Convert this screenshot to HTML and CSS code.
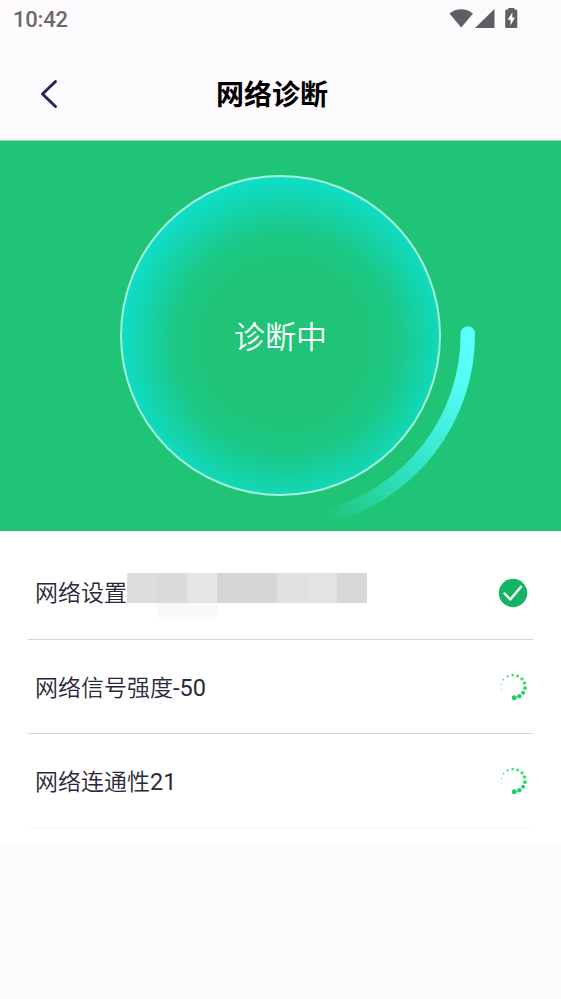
FILE: index.html
```html
<!DOCTYPE html>
<html lang="zh-CN">
<head>
<meta charset="utf-8">
<title>网络诊断</title>
<link rel="stylesheet" href="styles.css">
</head>
<body>
<div class="status">
  <span class="time">10:42</span>
  <svg class="status-icons" width="73" height="24" viewBox="0 0 73 24" fill="#615e63">
    <path d="M.5 8.500C7 2.800 17.500 2.800 24 8.500L12.200 22.500Z"/>
    <path d="M26 23 45.500 4V23Z"/>
    <path fill-rule="evenodd" d="M59.300 4.500V3H65.300V4.500H67Q68.300 4.500 68.300 6V21.500Q68.300 23 67 23H57.500Q56.200 23 56.200 21.500V6Q56.200 4.500 57.500 4.500ZM63.300 7.500 58.500 14.800H61.500V20.500L66 12.500H63.300Z"/>
  </svg>
</div>
<header class="header">
  <svg class="back" width="19" height="30" viewBox="0 0 19 30" fill="none" stroke="#1d285b" stroke-width="3" stroke-linecap="round" stroke-linejoin="round"><path d="M16.500 2.500 3.500 15 16.500 27.500"/></svg>
  <h1 class="title">网络诊断</h1>
</header>
<section class="hero">
  <div class="disc"><span class="phase">诊断中</span></div>
  <svg class="arc" width="561" height="390" viewBox="0 0 561 390" fill="none">
    <defs><linearGradient id="fade" gradientUnits="userSpaceOnUse" x1="467" y1="193" x2="330" y2="381">
      <stop offset="0" stop-color="#5cffff"/>
      <stop offset=".2" stop-color="#53fbf3"/>
      <stop offset=".5" stop-color="#3aead2"/>
      <stop offset=".75" stop-color="#2ad9ae"/>
      <stop offset=".9" stop-color="#22cc8d"/>
      <stop offset="1" stop-color="#1fc477"/>
    </linearGradient></defs>
    <path d="M467.800 193.500A187.500 187.500 0 0 1 325 376.500" stroke="url(#fade)" stroke-width="14.500" stroke-linecap="round"/>
  </svg>
</section>
<main class="list">
  <div class="row">
    <span class="label">网络设置</span>
    <span class="mask"><i class="a"></i><i class="b"></i><i class="c"></i><i class="d"></i><i class="d"></i><i class="e"></i><i class="f"></i><i class="g"></i></span>
    <svg class="state" width="30" height="30" viewBox="0 0 30 30"><circle cx="15" cy="15" r="14.200" fill="#16b364"/><path d="M6.500 15.500 12.300 21.500 23 8.700" fill="none" stroke="#fff" stroke-width="2.400" stroke-linecap="round" stroke-linejoin="round"/></svg>
  </div>
  <div class="row">
    <span class="label">网络信号强度<span class="num">-50</span></span>
    <svg class="state" width="30" height="30" viewBox="0 0 30 30"><g id="dots" transform="translate(1 -.6)">
      <circle cx="15.300" cy="26.300" r="2.500" fill="#1fcb6d"/><circle cx="20.300" cy="24.800" r="2.200" fill="#20ce6d"/><circle cx="24.100" cy="21.300" r="2" fill="#24d16d"/><circle cx="25.900" cy="16.700" r="1.900" fill="#2bd66d"/><circle cx="25.500" cy="11.700" r="1.750" fill="#32dc6c"/><circle cx="23" cy="7.500" r="1.650" fill="#35df69"/><circle cx="18.700" cy="4.500" r="1.500" fill="#36e065"/><circle cx="13.600" cy="3.700" r="1.250" fill="#36df62"/><circle cx="8.600" cy="5" r="1.050" fill="#3bdc65"/><circle cx="4.500" cy="8.200" r=".85" fill="#43da6c"/><circle cx="2.500" cy="12.700" r=".7" fill="#4fd976"/><circle cx="2.500" cy="17.600" r=".6" fill="#6bdd8a"/><circle cx="4.700" cy="22.200" r=".35" fill="#b6edc5"/></g></svg>
  </div>
  <div class="row last">
    <span class="label">网络连通性<span class="num">21</span></span>
    <svg class="state" width="30" height="30" viewBox="0 0 30 30"><use href="#dots"/></svg>
  </div>
</main>
</body>
</html>
```

FILE: styles.css
```css
* { box-sizing: border-box; }
body {
  margin: 0;
  min-height: 999px;
  background: #fefbff;
  font-family: Roboto, "Noto Sans CJK SC", sans-serif;
}
svg { display: block; flex: none; }
.status {
  height: 40px;
  padding: 0 39px 0 13px;
  display: flex;
  justify-content: space-between;
  align-items: flex-start;
}
.time {
  padding-top: 7px;
  font-size: 22px;
  line-height: 26px;
  font-weight: 500;
  letter-spacing: -0.2px;
  color: #6c696e;
}
.status-icons { margin-top: 5px; }
.header {
  height: 100px;
  padding: 0 0 0 39px;
  display: flex;
  align-items: center;
}
.back { margin-top: 7px; }
.title {
  margin: 12px 0 0 158px;
  font-size: 28px;
  line-height: 40px;
  font-weight: 700;
  color: #000;
}
.hero {
  position: relative;
  height: 391px;
  padding-top: 34px;
  border-top: 1px solid #8fdcb5;
  background: #1fc477;
}
.disc {
  width: 321px;
  height: 321px;
  margin: 0 auto;
  border: 2px solid #a4f0db;
  border-radius: 50%;
  background: radial-gradient(circle 168px at 51.5% 52.5%, #1fc477 0%, #1fc477 48%, #1bc887 66%, #15d3a9 83%, #0fdcc2 96%, #0fdec8 100%);
  display: flex;
  align-items: center;
  justify-content: center;
  color: #fff;
  font-size: 31px;
  font-weight: 350;
}
.phase { padding-bottom: 3px; }
.arc { position: absolute; left: 0; top: -1px; }
.list {
  height: 311px;
  padding: 15px 28px 0;
  background: #fff;
}
.row {
  height: 94px;
  padding: 0 5px 0 7px;
  border-bottom: 1px solid #cfd7df;
  display: flex;
  align-items: center;
}
.last { border-color: #f7f7f8; }
.label {
  padding-top: 3px;
  font-size: 23px;
  line-height: 34px;
  font-weight: 350;
  color: #2a2838;
  white-space: nowrap;
}
.num {
  font-weight: 400;
  font-size: 23.5px;
}
.state { margin-left: auto; }
.mask {
  height: 44px;
  display: flex;
  align-items: flex-start;
  margin-top: 4px;
}
.mask i { width: 30px; height: 30px; }
.mask .a { background: #dddde0; }
.mask .b { background: #dbdbdd; box-shadow: 0 14px #f9f9fa; }
.mask .c { background: #e6e6e8; box-shadow: 0 14px #f9f9fa; }
.mask .d { background: #d5d5d7; }
.mask .e { background: #e1e1e3; }
.mask .f { background: #e3e3e5; }
.mask .g { background: #d7d7d9; }
```
